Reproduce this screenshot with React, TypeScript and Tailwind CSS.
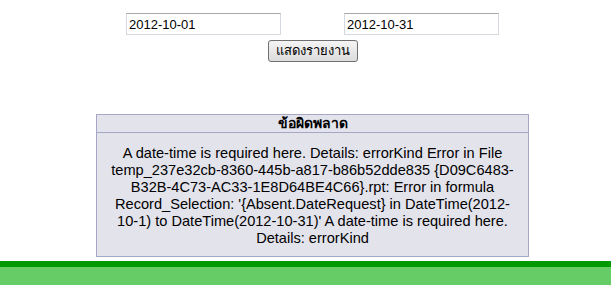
export default function App() {
  return (
    <div className="min-h-[285px] bg-white flex flex-col" style={{ fontFamily: "Arial, 'Liberation Sans', Tahoma, 'Noto Sans', sans-serif" }}>
      <div className="flex flex-col items-center pl-[14px] pt-[13px]">
        <div className="flex gap-[63px]">
          <input
            defaultValue="2012-10-01"
            className="w-[155px] h-[22px] px-[2px] text-[13px] text-black border border-[#d4d8e0] border-t-[#a8a8a8] outline-none"
          />
          <input
            defaultValue="2012-10-31"
            className="w-[155px] h-[22px] px-[2px] text-[13px] text-black border border-[#d4d8e0] border-t-[#a8a8a8] outline-none"
          />
        </div>
        <button className="mt-[5px] w-[90px] h-[22px] text-[13px] text-black rounded-[3px] border border-[#707070] bg-gradient-to-b from-[#f4f4f4] to-[#dcdcdc]">
          แสดงรายงาน
        </button>
        <div className="mt-[52px] w-[433px] border border-[#a6a6c6] bg-[#e3e3ec]">
          <div className="h-[18px] flex items-center justify-center text-[14px] font-bold text-black border-b border-[#a6a6c6]">
            ข้อผิดพลาด
          </div>
          <div className="px-[6px] pt-[12px] pb-[9px] text-center text-[14.6px] leading-[17px] text-black whitespace-nowrap">
            A date-time is required here. Details: errorKind Error in File
            <br />
            temp_237e32cb-8360-445b-a817-b86b52dde835 {"{D09C6483-"}
            <br />
            {"B32B-4C73-AC33-1E8D64BE4C66}"}.rpt: Error in formula
            <br />
            Record_Selection: '{"{Absent.DateRequest}"} in DateTime(2012-
            <br />
            10-1) to DateTime(2012-10-31)' A date-time is required here.
            <br />
            Details: errorKind
          </div>
        </div>
      </div>
      <div className="mt-[4px] h-[6px] bg-[#009900]" />
      <div className="flex-1 bg-[#66cc66]" />
    </div>
  );
}
